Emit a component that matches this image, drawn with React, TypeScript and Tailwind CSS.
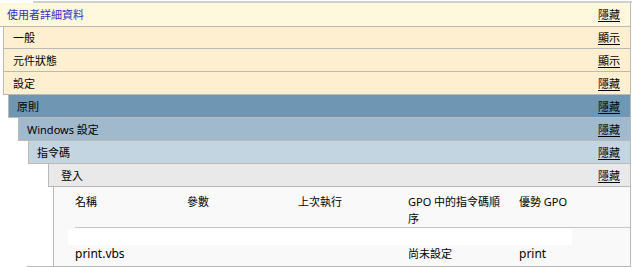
const font = { fontFamily: '"Noto Sans", "Noto Sans CJK TC", sans-serif' };

function Toggle({ label }: { label: string }) {
  return <a className="text-[11px] text-black underline underline-offset-2">{label}</a>;
}

type RowProps = {
  title: React.ReactNode;
  action: string;
  indent: string;
  bg: string;
  height: string;
  pad: string;
  titleClass?: string;
};

function Row({ title, action, indent, bg, height, pad, titleClass }: RowProps) {
  return (
    <div className={`flex items-center justify-between border-b border-r border-l border-[#b9b9b9] pr-[10px] pt-[2px] ${indent} ${bg} ${height} ${pad}`}>
      <span className={titleClass ?? 'text-[11px] text-black'}>{title}</span>
      <Toggle label={action} />
    </div>
  );
}

export default function App() {
  return (
    <div className="h-[267px] w-[632px] overflow-hidden bg-white" style={font}>
      <div className="h-[3px] pl-[33px] pt-[1px]">
        <div className="h-[2px] bg-[#cfcfcf]" />
      </div>
      <div className="mr-[1px]">
        <Row
          title="使用者詳細資料"
          action="隱藏"
          indent="ml-0 border-l-0"
          bg="bg-[#fef8dc]"
          height="h-[24px]"
          pad="pl-[7px]"
          titleClass="text-[11px] text-[#2f2fc8]"
        />
        <Row title="一般" action="顯示" indent="ml-[3px]" bg="bg-[#feefd0]" height="h-[22px]" pad="pl-[9px]" />
        <Row title="元件狀態" action="顯示" indent="ml-[3px]" bg="bg-[#feefd0]" height="h-[23px]" pad="pl-[9px]" />
        <Row title="設定" action="隱藏" indent="ml-[3px]" bg="bg-[#feefd0]" height="h-[23px]" pad="pl-[9px]" />
        <Row title="原則" action="隱藏" indent="ml-[8px]" bg="bg-[#6f96b3]" height="h-[23px]" pad="pl-[8px]" />
        <Row
          title="Windows 設定"
          action="隱藏"
          indent="ml-[18px]"
          bg="bg-[#a1b9cd]"
          height="h-[23px]"
          pad="pl-[8px]"
        />
        <Row title="指令碼" action="隱藏" indent="ml-[28px]" bg="bg-[#c3d5e1]" height="h-[23px]" pad="pl-[8px]" />
        <Row title="登入" action="隱藏" indent="ml-[48px]" bg="bg-[#e9e9e9]" height="h-[23px]" pad="pl-[12px]" />

        <div className="ml-[27px] border-b border-[#b9b9b9]">
          <div className="ml-[26px] h-[79px] border-l border-r border-[#b9b9b9] bg-[#f9f9f9] text-[11px] text-black">
            <div className="ml-[21px] grid grid-cols-[112px_111px_110px_111px_1fr] border-b border-[#c9c9c9] pt-[6px] leading-[17px]">
              <div>名稱</div>
              <div>參數</div>
              <div>上次執行</div>
              <div className="pr-[8px]">GPO 中的指令碼順序</div>
              <div>優勢 GPO</div>
            </div>
            <div className="ml-[14px] mt-[1px] h-[16px] w-[504px] bg-white" />
            <div className="ml-[21px] grid grid-cols-[112px_111px_110px_111px_1fr] pt-[1px] leading-[16px]">
              <div className="text-[12px]">print.vbs</div>
              <div />
              <div />
              <div>尚未設定</div>
              <div className="text-[12px]">print</div>
            </div>
          </div>
        </div>
      </div>
    </div>
  );
}
